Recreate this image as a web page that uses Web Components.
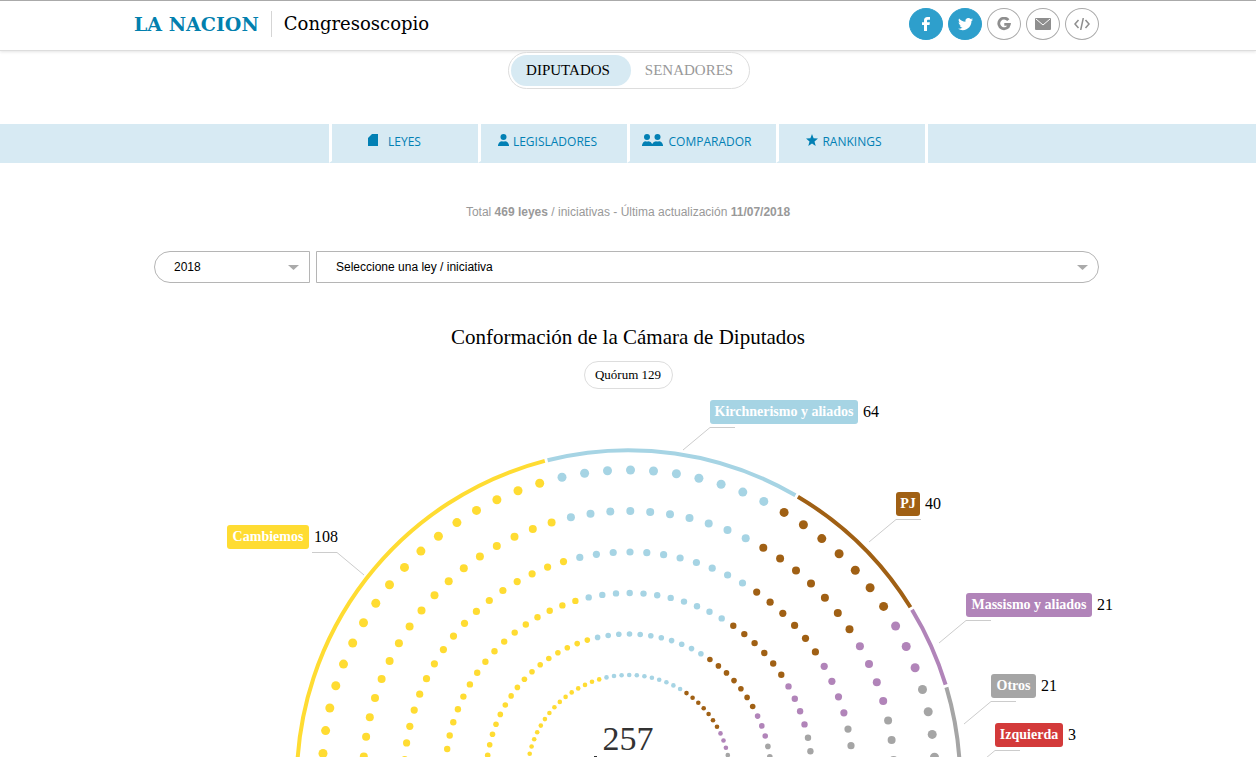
<!DOCTYPE html>
<html lang="es">
<head>
<meta charset="utf-8">
<meta name="viewport" content="width=device-width, initial-scale=1">
<title>Congresoscopio - LA NACION</title>
<style>
html, body { margin: 0; height: 100%; }
body { background: #fff; color: #000; font-family: "Liberation Serif", Georgia, serif; }
</style>
</head>
<body>
<congreso-app></congreso-app>
<script>
const define = (name, html, setup) => {
  const tpl = document.createElement('template');
  tpl.innerHTML = html;
  customElements.define(name, class extends HTMLElement {
    connectedCallback() {
      if (this.shadowRoot) return;
      const root = this.attachShadow({ mode: 'open' });
      root.append(tpl.content.cloneNode(true));
      if (setup) setup(this, root);
    }
  });
};

/* Round share button in the header */
define('share-button', `
<style>
:host { display: block; --fg: #8e8e8e; --bg: #fff; --line: #aaa; }
:host([filled]) { --fg: #fff; --bg: #2e9fcc; --line: #2e9fcc; }
button { display: flex; align-items: center; justify-content: center; box-sizing: border-box; width: 34px; height: 32px; padding: 0; border: 1px solid var(--line); border-radius: 50%; background: var(--bg); color: var(--fg); cursor: pointer; }
</style>
<button type="button"><slot></slot></button>`, (host, root) => {
  root.querySelector('button').setAttribute('aria-label', host.getAttribute('label'));
});

define('site-header', `
<style>
:host { display: block; border-top: 1px solid #aaa; border-bottom: 1px solid #ddd; box-shadow: 0 1px 3px #e4e4e4; background: #fff; }
.inner { display: flex; align-items: center; box-sizing: border-box; max-width: 988px; height: 49px; padding: 0 23px 3px 0; margin: 0 auto; }
.logo { color: #0280ae; font: bold 19px/26px "DejaVu Serif", serif; text-decoration: none; padding-right: 12px; white-space: nowrap; }
.section { border-left: 1px solid #d5d5d5; padding-left: 12px; font: 18px/26px "DejaVu Serif", serif; color: #000; text-decoration: none; }
nav { display: flex; gap: 5px; margin-left: auto; }
svg { display: block; }
</style>
<div class="inner">
  <a class="logo" href="#">LA NACION</a>
  <a class="section" href="#">Congresoscopio</a>
  <nav aria-label="Compartir">
    <share-button filled label="Facebook"><svg width="10" height="16" viewBox="0 0 10 16"><path fill="currentColor" d="M3 15V9H1V6.200h2V4.400C3 2.300 4.200 1 6.400 1H9v2.700H7.200C6.400 3.700 6 4.100 6 4.800v1.400h2.900L8.500 9H6v6z"/></svg></share-button>
    <share-button filled label="Twitter"><svg width="15" height="14" viewBox="0 0 24 21"><path fill="currentColor" d="M24 3.200c-.9.400-1.800.7-2.800.8 1-.6 1.800-1.600 2.200-2.700-1 .6-2 1-3.100 1.200A4.900 4.900 0 0 0 11.900 7C7.700 6.800 4.100 4.800 1.700 1.800c-1.300 2.200-.7 5.100 1.500 6.600-.8 0-1.600-.2-2.200-.6 0 2.300 1.600 4.400 3.900 4.900-.7.2-1.500.2-2.200.1.600 2 2.400 3.400 4.600 3.400A9.900 9.900 0 0 1 0 18.200 14 14 0 0 0 7.500 20.400c9.100 0 14.300-7.700 14-14.600 1-.7 1.800-1.600 2.500-2.600z"/></svg></share-button>
    <share-button label="Google"><svg width="14" height="14" viewBox="0 0 14 14"><path fill="none" stroke="currentColor" stroke-width="2.800" d="M11.300 3.200A5.300 5.300 0 1 0 12.300 7.400H7.300"/></svg></share-button>
    <share-button label="Correo"><svg width="16" height="12" viewBox="0 0 16 12"><rect width="16" height="12" rx="1" fill="currentColor"/><path fill="none" stroke="#fff" d="M1 1l7 6 7-6" stroke-width="1"/></svg></share-button>
    <share-button label="Insertar"><svg width="16" height="12" viewBox="0 0 16 12"><path fill="none" stroke="currentColor" stroke-width="1.500" d="M4.500 2L1 6l3.500 4M11.500 2L15 6l-3.500 4M9.300 0L6.700 12"/></svg></share-button>
  </nav>
</div>`);

define('chamber-switch', `
<style>
:host { display: flex; justify-content: center; padding-left: 2px; }
div { display: flex; box-sizing: border-box; width: 242px; height: 37px; padding: 2px; border: 1px solid #ddd; border-radius: 19px; background: #fff; }
button { flex: 1; padding: 0 0 1px; border: 0; border-radius: 16px; background: none; font: 15px/20px "Liberation Serif", serif; color: #999; cursor: pointer; }
button[aria-pressed=true] { flex: 0 0 120px; padding-right: 6px; background: #d7eaf3; color: #000; }
</style>
<div role="group" aria-label="Cámara">
  <button type="button" aria-pressed="true">DIPUTADOS</button>
  <button type="button" aria-pressed="false">SENADORES</button>
</div>`);

define('nav-tab', `
<style>
:host { display: block; flex: 0 0 149px; box-sizing: border-box; border-left: 3px solid #fff; border-bottom: 2px solid #d7eaf3; }
a { display: flex; justify-content: center; align-items: center; gap: var(--gap, 4px); box-sizing: border-box; height: 37px; padding: 0 var(--end, 12px) 1px 0; color: #0280b4; font: 500 12px/16px "Open Sans", sans-serif; text-decoration: none; }
</style>
<a href="#"><slot name="icon"></slot><slot></slot></a>`);

define('main-nav', `
<style>
:host { display: flex; justify-content: center; background: #d7eaf3; }
nav { display: flex; border-right: 3px solid #fff; }
svg { display: block; fill: currentColor; margin-bottom: 4px; }
.laws { --gap: 9px; --end: 20px; }
.compare { --gap: 6px; }
.rank { --end: 15px; }
</style>
<nav aria-label="Secciones">
  <nav-tab class="laws"><svg slot="icon" width="11" height="12" viewBox="0 0 11 12"><path d="M4 0h6v12H0V4z"/></svg>LEYES</nav-tab>
  <nav-tab><svg slot="icon" width="11" height="12" viewBox="0 0 11 12"><circle cx="5.500" cy="3" r="3"/><path d="M0 12V11Q1 7.500 4 7.200Q5.500 8 7 7.200Q10 7.500 11 11v1z"/></svg>LEGISLADORES</nav-tab>
  <nav-tab class="compare"><svg slot="icon" width="21" height="12" viewBox="0 0 21 12"><circle cx="5" cy="3" r="3"/><circle cx="15.500" cy="3" r="3"/><path d="M0 12V11Q1 7.500 3.500 7.200Q5 8 6.500 7.200Q9 7.500 10.200 10Q11.500 7.500 14 7.200Q15.500 8 17 7.200Q20 7.500 21 11v1z"/></svg>COMPARADOR</nav-tab>
  <nav-tab class="rank"><svg slot="icon" width="12" height="12" viewBox="0 0 12 12"><path d="M6 0l1.600 4.300L12 4.600 8.500 7.400 9.700 12 6 9.400 2.300 12l1.200-4.600L0 4.600l4.400-.3z"/></svg>RANKINGS</nav-tab>
</nav>`);

/* Drop-down; its value and accessible name come from attributes */
define('law-select', `
<style>
:host { display: block; position: relative; --r: 0; }
select { appearance: none; display: block; width: 100%; height: 32px; box-sizing: border-box; padding: 0 30px 0 19px; border: 1px solid #b5b5b5; border-radius: var(--r); background: #fff; color: #000; font: 12px/16px "Liberation Sans", Arial, sans-serif; }
svg { position: absolute; right: 11px; top: 14px; pointer-events: none; fill: #aaa; }
</style>
<select><option></option></select>
<svg width="11" height="5" viewBox="0 0 11 5"><path d="M0 0h11L5.500 5z"/></svg>`, (host, root) => {
  root.querySelector('option').textContent = host.getAttribute('value');
  root.querySelector('select').setAttribute('aria-label', host.getAttribute('label'));
});

define('law-filter', `
<style>
:host { display: block; }
p { margin: 0; text-align: center; color: #999; font: 12px/16px "Liberation Sans", Arial, sans-serif; }
.row { display: grid; grid-template-columns: 156px 1fr; gap: 6px; box-sizing: border-box; max-width: 948px; padding-right: 3px; margin: 31px auto 0; }
.year { --r: 16px 0 0 16px; }
.law { --r: 0 16px 16px 0; }
</style>
<p>Total <b>469 leyes</b> / iniciativas - Última actualización <b>11/07/2018</b></p>
<div class="row">
  <law-select class="year" label="Año" value="2018"></law-select>
  <law-select class="law" label="Ley" value="Seleccione una ley / iniciativa"></law-select>
</div>`);

define('party-label', `
<style>
:host { display: flex; align-items: center; gap: 5px; position: absolute; white-space: nowrap; }
.tag { display: flex; justify-content: center; width: var(--tag); border-radius: 3px; background: var(--party); color: #fff; font-size: 14px; font-weight: bold; line-height: 24px; }
.count { font-size: 16px; line-height: 24px; color: #000; }
</style>
<span class="tag"><slot></slot></span><span class="count"><slot name="count"></slot></span>`);

const PARTIES = [
  { name: 'Cambiemos', seats: 108, color: '#ffdc32', x: 99, y: 125, w: 82, line: 'M184 152.5h25l27 22.500' },
  { name: 'Kirchnerismo y aliados', seats: 64, color: '#a6d4e4', x: 582, y: 0, w: 148 },
  { name: 'PJ', seats: 40, color: '#a06014', x: 768, y: 92, w: 24 },
  { name: 'Massismo y aliados', seats: 21, color: '#b184b9', x: 838, y: 193, w: 126 },
  { name: 'Otros', seats: 21, color: '#a5a5a5', x: 863, y: 274, w: 45 },
  { name: 'Izquierda', seats: 3, color: '#d33a3a', x: 867, y: 323, w: 68 }
];

define('seat-chart', `
<style>
:host { display: block; overflow: hidden; }
.stage { position: relative; width: 1000px; left: 50%; margin-left: -500px; }
svg { display: block; width: 1000px; height: 400px; }
text { font: 34px "Liberation Serif", serif; fill: #333; text-anchor: middle; }
</style>
<div class="stage"><svg viewBox="0 0 1000 400" role="img" aria-label="Bancas por bloque"></svg></div>`, (host, root) => {
  const total = 257, rows = 6;
  const rad = d => d * Math.PI / 180;
  const polar = (cx, cy, r, deg) => [cx - r * Math.cos(rad(deg)), cy - r * Math.sin(rad(deg))].map(n => n.toFixed(1));
  const dotSize = [2.3, 2.8, 3.2, 3.6, 4, 4.5];
  const step = 180 / (total / rows - 1);
  const stage = root.querySelector('.stage');
  let out = '', seat = 0;
  for (const p of PARTIES) {
    const a = seat / total * 180 + (seat ? 0.25 : 0);
    const b = (seat + p.seats) / total * 180 - 0.25;
    const from = polar(500.5, 381.9, 331.7, a), to = polar(500.5, 381.9, 331.7, b);
    out += `<path d="M${from}A331.7 331.7 0 0 1 ${to}" fill="none" stroke="${p.color}" stroke-width="4"/>`;
    for (let i = 0; i < p.seats; i++, seat++) {
      const row = seat % rows;
      const [x, y] = polar(500.6, 376.5, 101.5 + 41 * row, Math.floor(seat / rows) * step);
      out += `<circle cx="${x}" cy="${y}" r="${dotSize[row]}" fill="${p.color}"/>`;
    }
    const line = p.line || `M${p.x + 25} ${p.y + 27.5}h-25l-27 22.500`;
    out += `<path d="${line}" fill="none" stroke="#ccc"/>`;
    const label = document.createElement('party-label');
    label.style.cssText = `left:${p.x}px;top:${p.y}px;--party:${p.color};--tag:${p.w}px`;
    label.innerHTML = `${p.name}<span slot="count">${p.seats}</span>`;
    stage.append(label);
  }
  out += `<text x="500" y="350">${total}</text><path d="M466 356h3v20h-2v-19h-1z" fill="#333"/>`;
  root.querySelector('svg').innerHTML = out;
});

define('congreso-app', `
<style>
:host { display: flex; flex-direction: column; height: 100%; overflow: hidden; }
chamber-switch { margin-top: 1px; }
main-nav { margin-top: 35px; }
law-filter { margin: 41px 20px 0; }
h1 { margin: 42px 0 0; text-align: center; font-size: 21px; font-weight: normal; line-height: 24px; }
.quorum { align-self: center; box-sizing: border-box; min-width: 89px; padding: 0 10px; margin: 12px 0 11px; border: 1px solid #ddd; border-radius: 14px; font-size: 13px; line-height: 26px; text-align: center; }
seat-chart { flex: 1 1 0; min-height: 0; }
</style>
<site-header></site-header>
<chamber-switch></chamber-switch>
<main-nav></main-nav>
<law-filter></law-filter>
<h1>Conformación de la Cámara de Diputados</h1>
<div class="quorum">Quórum 129</div>
<seat-chart></seat-chart>`);
</script>
</body>
</html>
